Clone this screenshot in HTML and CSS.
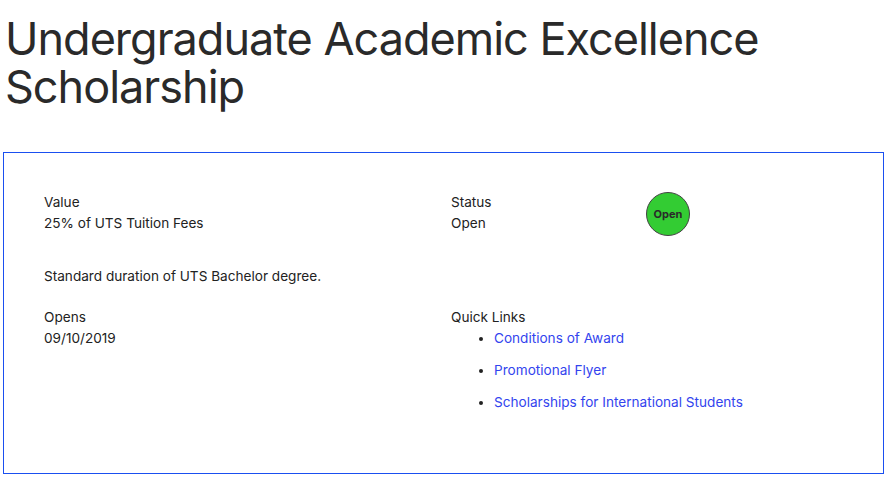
FILE: index.html
```html
<!DOCTYPE html>
<html>
<head>
<meta charset="utf-8">
<link rel="stylesheet" href="styles.css">
</head>
<body>
<h1 class="title">Undergraduate Academic Excellence Scholarship</h1>
<div class="card">
  <div class="grid">
    <div class="field">
      <div class="label">Value</div>
      <div class="value">25% of UTS Tuition Fees</div>
    </div>
    <div class="field status">
      <div>
        <div class="label">Status</div>
        <div class="value">Open</div>
      </div>
      <div class="badge">Open</div>
    </div>
    <div class="field full">
      <div class="value">Standard duration of UTS Bachelor degree.</div>
    </div>
    <div class="field">
      <div class="label">Opens</div>
      <div class="value">09/10/2019</div>
    </div>
    <div class="field">
      <div class="label">Quick Links</div>
      <ul class="links">
        <li><a href="#">Conditions of Award</a></li>
        <li><a href="#">Promotional Flyer</a></li>
        <li><a href="#">Scholarships for International Students</a></li>
      </ul>
    </div>
  </div>
</div>
</body>
</html>
```
FILE: styles.css
```css
html, body {
  margin: 0;
  padding: 0;
  background: #fff;
}
body {
  font-family: Inter, "Liberation Sans", sans-serif;
  color: #222;
  padding: 0 4px 0 3px;
}
.title {
  font-family: Inter, "Liberation Sans", sans-serif;
  font-weight: 400;
  font-size: 45px;
  line-height: 48px;
  letter-spacing: -1px;
  color: #2a2a2a;
  margin: 15px 0 0 2px;
  padding: 0;
}
.card {
  border: 1px solid #1a4ff0;
  margin-top: 41px;
  height: 322px;
  box-sizing: border-box;
  padding: 39px 40px 0 40px;
}
.grid {
  display: grid;
  grid-template-columns: 407px 1fr;
  row-gap: 0;
  font-size: 13.6px;
  line-height: 21px;
}
.field.full {
  grid-column: 1 / 3;
  margin: 32px 0 20px 0;
}
.status {
  display: grid;
  grid-template-columns: 195px 44px;
  align-items: start;
}
.badge {
  width: 42px;
  height: 42px;
  border-radius: 50%;
  background: #33cc33;
  border: 1px solid #444;
  margin-top: 0;
  margin-bottom: -2px;
  display: flex;
  align-items: center;
  justify-content: center;
  font-size: 11px;
  font-weight: 700;
  color: #2a2a2a;
}
.label, .value {
  color: #222;
}
.links {
  margin: 0;
  padding-left: 43px;
}
.links li {
  line-height: 21px;
  margin-bottom: 11px;
}
.links a {
  color: #3344ee;
  text-decoration: none;
}
```
